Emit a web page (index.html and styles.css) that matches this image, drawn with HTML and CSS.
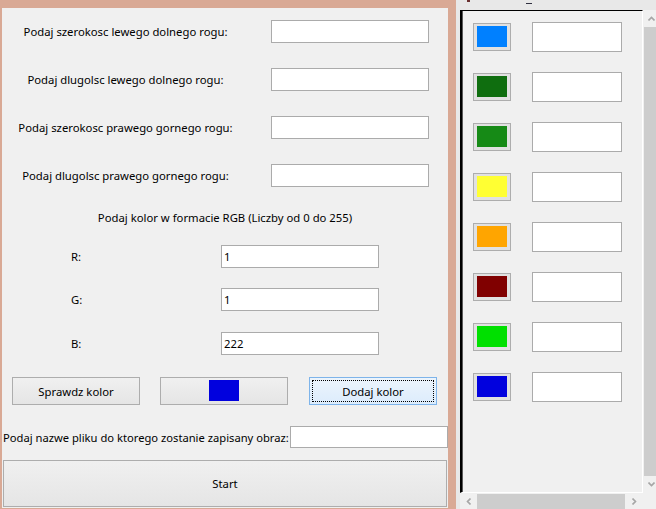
FILE: index.html
```html
<!DOCTYPE html>
<html>
<head>
<meta charset="utf-8">
<link rel="stylesheet" href="styles.css">
</head>
<body>
<div class="left">
  <div class="win">
    <div class="dims">
      <div class="lbl">Podaj szerokosc lewego dolnego rogu:</div><div class="tb"></div>
      <div class="lbl">Podaj dlugolsc lewego dolnego rogu:</div><div class="tb"></div>
      <div class="lbl">Podaj szerokosc prawego gornego rogu:</div><div class="tb"></div>
      <div class="lbl">Podaj dlugolsc prawego gornego rogu:</div><div class="tb"></div>
    </div>
    <div class="rgb-title">Podaj kolor w formacie RGB (Liczby od 0 do 255)</div>
    <div class="rgb-row r1"><span class="rl">R:</span><div class="tb val">1</div></div>
    <div class="rgb-row r2"><span class="rl">G:</span><div class="tb val">1</div></div>
    <div class="rgb-row r3"><span class="rl">B:</span><div class="tb val">222</div></div>
    <div class="btns">
      <div class="btn">Sprawdz kolor</div>
      <div class="btn"><span class="chip" style="background:#0101de"></span></div>
      <div class="btn focus"><span class="focusrect">Dodaj kolor</span></div>
    </div>
    <div class="file">
      <span class="flbl">Podaj nazwe pliku do ktorego zostanie zapisany obraz:</span>
      <div class="tb ftb"></div>
    </div>
    <div class="start">Start</div>
  </div>
</div>
<div class="right">
  <div class="topstrip"><span class="m1"></span><span class="m2"></span></div>
  <div class="scrollarea">
    <div class="viewport">
      <div class="swrow"><div class="sw"><span class="swc" style="background:#0080ff"></span></div><div class="stb"></div></div>
      <div class="swrow"><div class="sw"><span class="swc" style="background:#0f6e0f"></span></div><div class="stb"></div></div>
      <div class="swrow"><div class="sw"><span class="swc" style="background:#168a16"></span></div><div class="stb"></div></div>
      <div class="swrow"><div class="sw"><span class="swc" style="background:#ffff33"></span></div><div class="stb"></div></div>
      <div class="swrow"><div class="sw"><span class="swc" style="background:#ffa500"></span></div><div class="stb"></div></div>
      <div class="swrow"><div class="sw"><span class="swc" style="background:#800000"></span></div><div class="stb"></div></div>
      <div class="swrow"><div class="sw"><span class="swc" style="background:#00e000"></span></div><div class="stb"></div></div>
      <div class="swrow"><div class="sw"><span class="swc" style="background:#0101de"></span></div><div class="stb"></div></div>
    </div>
    <div class="vscroll">
      <div class="arr"><svg width="7" height="5" viewBox="0 0 7 5"><polyline points="0.5,4.5 3.5,1.5 6.5,4.5" fill="none" stroke="#a6a6a6" stroke-width="1.6"/></svg></div>
      <div class="vthumb"></div>
      <div class="arr"><svg width="7" height="5" viewBox="0 0 7 5"><polyline points="0.5,0.5 3.5,3.5 6.5,0.5" fill="none" stroke="#a6a6a6" stroke-width="1.6"/></svg></div>
    </div>
    <div class="hscroll">
      <div class="harr"><svg width="5" height="7" viewBox="0 0 5 7"><polyline points="4.5,0.5 1.5,3.5 4.5,6.5" fill="none" stroke="#a6a6a6" stroke-width="1.6"/></svg></div>
      <div class="hthumb"></div>
      <div class="harr"><svg width="5" height="7" viewBox="0 0 5 7"><polyline points="0.5,0.5 3.5,3.5 0.5,6.5" fill="none" stroke="#a6a6a6" stroke-width="1.6"/></svg></div>
    </div>
    <div class="corner"></div>
  </div>
</div>
</body>
</html>
```
FILE: styles.css
```css
html, body {
  margin: 0;
  padding: 0;
}
body {
  width: 656px;
  height: 509px;
  overflow: hidden;
  display: flex;
  font-family: "Noto Sans", "Open Sans", sans-serif;
  font-size: 11.3px;
  color: #000;
}
.left {
  width: 456px;
  flex: none;
  background: #d9a995;
  padding: 8px 8px 1px 2px;
  box-sizing: border-box;
}
.win {
  width: 446px;
  height: 500px;
  background: #f0f0f0;
  display: flex;
  flex-direction: column;
}
.tb {
  background: #fff;
  border: 1px solid #ababab;
  box-sizing: border-box;
  width: 158px;
  height: 23px;
}
.dims {
  margin-top: 12px;
  display: grid;
  grid-template-columns: 247px 158px;
  grid-auto-rows: 23px;
  column-gap: 22px;
  row-gap: 25px;
}
.lbl {
  display: flex;
  align-items: center;
  justify-content: center;
  white-space: nowrap;
}
.rgb-title {
  margin-top: 23px;
  height: 16px;
  line-height: 16px;
  text-align: center;
}
.rgb-row {
  display: flex;
  align-items: center;
  padding-left: 69px;
  height: 23px;
}
.r1 { margin-top: 19px; }
.r2 { margin-top: 20px; }
.r3 { margin-top: 21px; }
.rl {
  width: 150px;
}
.val {
  padding-left: 2px;
  line-height: 21px;
}
.btns {
  margin-top: 22px;
  display: flex;
  padding-left: 10px;
  gap: 20px;
}
.btn {
  width: 128px;
  height: 28px;
  box-sizing: border-box;
  border: 1px solid #adadad;
  background: linear-gradient(#f0f0f0, #e5e5e5);
  display: flex;
  align-items: center;
  justify-content: center;
}
.btn + .btn + .btn {
  margin-left: 1px;
}
.chip {
  width: 30px;
  height: 21px;
  margin-top: -2px;
}
.btn.focus {
  border-color: #7eb4ea;
  background: linear-gradient(#ecf4fc, #dcecfc);
  padding: 2px;
}
.focusrect {
  flex: 1;
  align-self: stretch;
  border: 1px dotted #000;
  display: flex;
  align-items: center;
  justify-content: center;
}
.file {
  margin-top: 21px;
  display: flex;
  align-items: center;
  padding-left: 1px;
  height: 22px;
  white-space: nowrap;
}
.flbl {
  width: 287px;
  flex: none;
  font-size: 11.2px;
}
.ftb {
  height: 22px;
  flex: none;
}
.start {
  margin-top: 12px;
  margin-left: 1px;
  width: 444px;
  height: 47px;
  box-sizing: border-box;
  border: 1px solid #adadad;
  background: linear-gradient(#f0f0f0, #e5e5e5);
  display: flex;
  align-items: center;
  justify-content: center;
}
.right {
  flex: none;
  width: 200px;
  background: #e8e8e8;
  display: flex;
  flex-direction: column;
}
.topstrip {
  height: 10px;
  flex: none;
  display: flex;
  align-items: flex-start;
}
.m1 {
  width: 3px;
  height: 2px;
  background: #6a3030;
  margin-left: 11px;
}
.m2 {
  width: 6px;
  height: 1px;
  background: #303040;
  margin-left: 56px;
  margin-top: 3px;
}
.scrollarea {
  margin-left: 4px;
  width: 196px;
  flex: none;
  display: grid;
  grid-template-columns: 183px 13px;
  grid-template-rows: 483px 16px;
}
.viewport {
  box-sizing: border-box;
  background: #f0f0f0;
  border-top: 1px solid #000;
  border-left: 2px solid #000;
  border-right: 1px solid #fff;
  border-bottom: 1px solid #fff;
  box-shadow: inset 1px 0 0 #5a5a5a;
  padding: 11px 0 0 11px;
  overflow: hidden;
}
.swrow {
  display: flex;
  align-items: flex-start;
  height: 50px;
}
.sw {
  margin-top: 1px;
  width: 38px;
  height: 28px;
  box-sizing: border-box;
  border: 1px solid #adadad;
  background: #e1e1e1;
  padding: 2px 3px 3px 3px;
}
.swc {
  display: block;
  width: 30px;
  height: 21px;
}
.stb {
  margin-left: 21px;
  width: 90px;
  height: 30px;
  box-sizing: border-box;
  background: #fff;
  border: 1px solid #ababab;
}
.vscroll {
  background: #f0f0f0;
  display: flex;
  flex-direction: column;
  padding-left: 1px;
}
.arr {
  height: 17px;
  flex: none;
  display: flex;
  align-items: center;
  padding-left: 4px;
}
.vthumb {
  flex: 1;
  background: #cdcdcd;
}
.hscroll {
  background: #f0f0f0;
  display: flex;
}
.harr {
  width: 17px;
  flex: none;
  display: flex;
  align-items: center;
  justify-content: center;
}
.hthumb {
  flex: 1;
  margin: 1px 1px 0 0;
  background: #cdcdcd;
}
.corner {
  background: #f0f0f0;
}
```
